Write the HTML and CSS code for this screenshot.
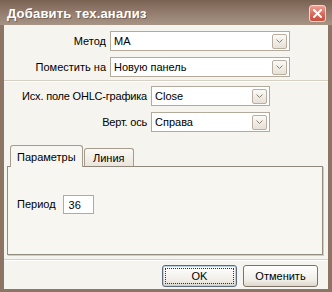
FILE: index.html
```html
<!DOCTYPE html>
<html lang="ru">
<head>
    <meta charset="UTF-8">
    <title>Добавить тех.анализ</title>
    <link rel="stylesheet" href="styles.css">
</head>
<body>
    <div class="window">
        <div class="titlebar">
            <span class="title">Добавить тех.анализ</span>
            <span class="close">
                <svg width="9" height="9" viewBox="0 0 9 9"><path d="M1 1L8 8M8 1L1 8" stroke="#fff" stroke-width="2" stroke-linecap="square"/></svg>
            </span>
        </div>
        <div class="client">
            <div class="form form-main">
                <label>Метод</label>
                <div class="combo"><span>МА</span><span class="drop"><svg width="7" height="4" viewBox="0 0 7 4"><path d="M0.5 0.5L3.5 3.5L6.5 0.5" fill="none" stroke="#8a7e70"/></svg></span></div>
                <label>Поместить на</label>
                <div class="combo"><span>Новую панель</span><span class="drop"><svg width="7" height="4" viewBox="0 0 7 4"><path d="M0.5 0.5L3.5 3.5L6.5 0.5" fill="none" stroke="#8a7e70"/></svg></span></div>
            </div>
            <div class="separator"></div>
            <div class="form form-source">
                <label>Исх. поле OHLC-графика</label>
                <div class="combo"><span>Close</span><span class="drop"><svg width="7" height="4" viewBox="0 0 7 4"><path d="M0.5 0.5L3.5 3.5L6.5 0.5" fill="none" stroke="#8a7e70"/></svg></span></div>
                <label>Верт. ось</label>
                <div class="combo"><span>Справа</span><span class="drop"><svg width="7" height="4" viewBox="0 0 7 4"><path d="M0.5 0.5L3.5 3.5L6.5 0.5" fill="none" stroke="#8a7e70"/></svg></span></div>
            </div>
            <div class="tabs">
                <div class="tab-strip">
                    <div class="tab active">Параметры</div>
                    <div class="tab">Линия</div>
                </div>
                <div class="tab-panel">
                    <label>Период</label>
                    <div class="field">36</div>
                </div>
            </div>
            <div class="separator bottom"></div>
            <div class="buttons">
                <button class="btn default"><span>OK</span></button>
                <button class="btn">Отменить</button>
            </div>
        </div>
    </div>
</body>
</html>
```

FILE: styles.css
```css
body {
    margin: 0;
    padding: 0;
    font-family: 'Liberation Sans', Arial, sans-serif;
    font-size: 11px;
    color: #000;
    background: #8d7565;
}
.window {
    width: 332px;
    height: 292px;
    box-sizing: border-box;
    padding: 0 4px 3px 4px;
    background: #8d7565;
    display: flex;
    flex-direction: column;
}
.titlebar {
    height: 25px;
    margin: 0 -4px;
    padding: 0 5px 0 7px;
    display: flex;
    align-items: center;
    justify-content: space-between;
    background: linear-gradient(#7a6253 0%, #917a6b 45%, #a69485 100%);
}
.title {
    color: #fff;
    font-weight: bold;
    font-size: 13px;
    letter-spacing: 0.2px;
    text-shadow: 1px 1px 0 rgba(60, 40, 30, 0.4);
    margin-top: 1px;
}
.close {
    width: 15px;
    height: 15px;
    margin-top: 2px;
    margin-right: 1px;
    border: 1px solid #f3d8d2;
    border-radius: 3px;
    background: linear-gradient(#eea096, #d9675a 55%, #c9503f);
    display: flex;
    align-items: center;
    justify-content: center;
}
.client {
    flex: 1;
    background: #f6f4ef;
    display: flex;
    flex-direction: column;
}
.form {
    display: grid;
    row-gap: 6px;
    column-gap: 4px;
    align-items: center;
}
.form label {
    text-align: right;
    white-space: nowrap;
}
.form-main {
    grid-template-columns: 102px 180px;
    padding-top: 6px;
}
.form-source {
    grid-template-columns: 143px 119px;
    margin-top: 4px;
}
.form-source label {
    letter-spacing: -0.2px;
}
.combo {
    height: 20px;
    box-sizing: border-box;
    border: 1px solid #b4aa9c;
    background: #fff;
    display: flex;
    align-items: center;
    justify-content: space-between;
    padding: 0 2px 0 3px;
}
.drop {
    width: 15px;
    height: 15px;
    box-sizing: border-box;
    border: 1px solid #b9ad9f;
    border-radius: 2px;
    background: linear-gradient(#fbfaf7, #e7e1d6);
    display: flex;
    align-items: center;
    justify-content: center;
}
.separator {
    margin-top: 3px;
    border-top: 1px solid #d5cfc4;
    border-bottom: 1px solid #fff;
}
.separator.bottom {
    margin-top: 4px;
}
.tabs {
    margin: 13px 5px 0 3px;
}
.tab-strip {
    display: flex;
    align-items: flex-end;
    padding-left: 3px;
}
.tab {
    height: 18px;
    padding: 0 8px;
    box-sizing: border-box;
    border: 1px solid #a49c8e;
    border-bottom: none;
    border-radius: 3px 3px 0 0;
    background: linear-gradient(#fbf9f5, #ebe6dc);
    display: flex;
    align-items: center;
}
.tab.active {
    height: 22px;
    width: 73px;
    margin-bottom: -1px;
    margin-right: 1px;
    padding-left: 6px;
    background: #f8f6f1;
    position: relative;
    z-index: 1;
}
.tab-panel {
    height: 89px;
    box-sizing: border-box;
    border: 1px solid #938c80;
    border-top-color: #8e877b;
    box-shadow: 1px 1px 0 #d3ccbf;
    background: #f8f6f1;
    display: flex;
    align-items: flex-start;
    padding: 28px 0 0 9px;
    gap: 7px;
}
.tab-panel label {
    margin-top: 3px;
}
.field {
    width: 31px;
    height: 19px;
    box-sizing: border-box;
    border: 1px solid #b4aa9c;
    background: #fff;
    padding: 3px 0 0 5px;
}
.buttons {
    display: flex;
    justify-content: flex-end;
    gap: 6px;
    margin-top: 4px;
    padding-right: 10px;
}
.btn {
    width: 75px;
    height: 22px;
    font-family: 'Liberation Sans', Arial, sans-serif;
    font-size: 11px;
    color: #000;
    border: 1px solid #7c7366;
    border-radius: 3px;
    background: linear-gradient(#ffffff, #f1eee8 70%, #ded8cc);
    padding: 0;
}
.btn.default {
    border-color: #5a6a80;
    box-shadow: inset 0 0 0 1px #bcd0ea;
    padding: 2px;
}
.btn.default span {
    display: flex;
    height: 100%;
    box-sizing: border-box;
    align-items: center;
    justify-content: center;
    border: 1px dotted #333;
}
```
